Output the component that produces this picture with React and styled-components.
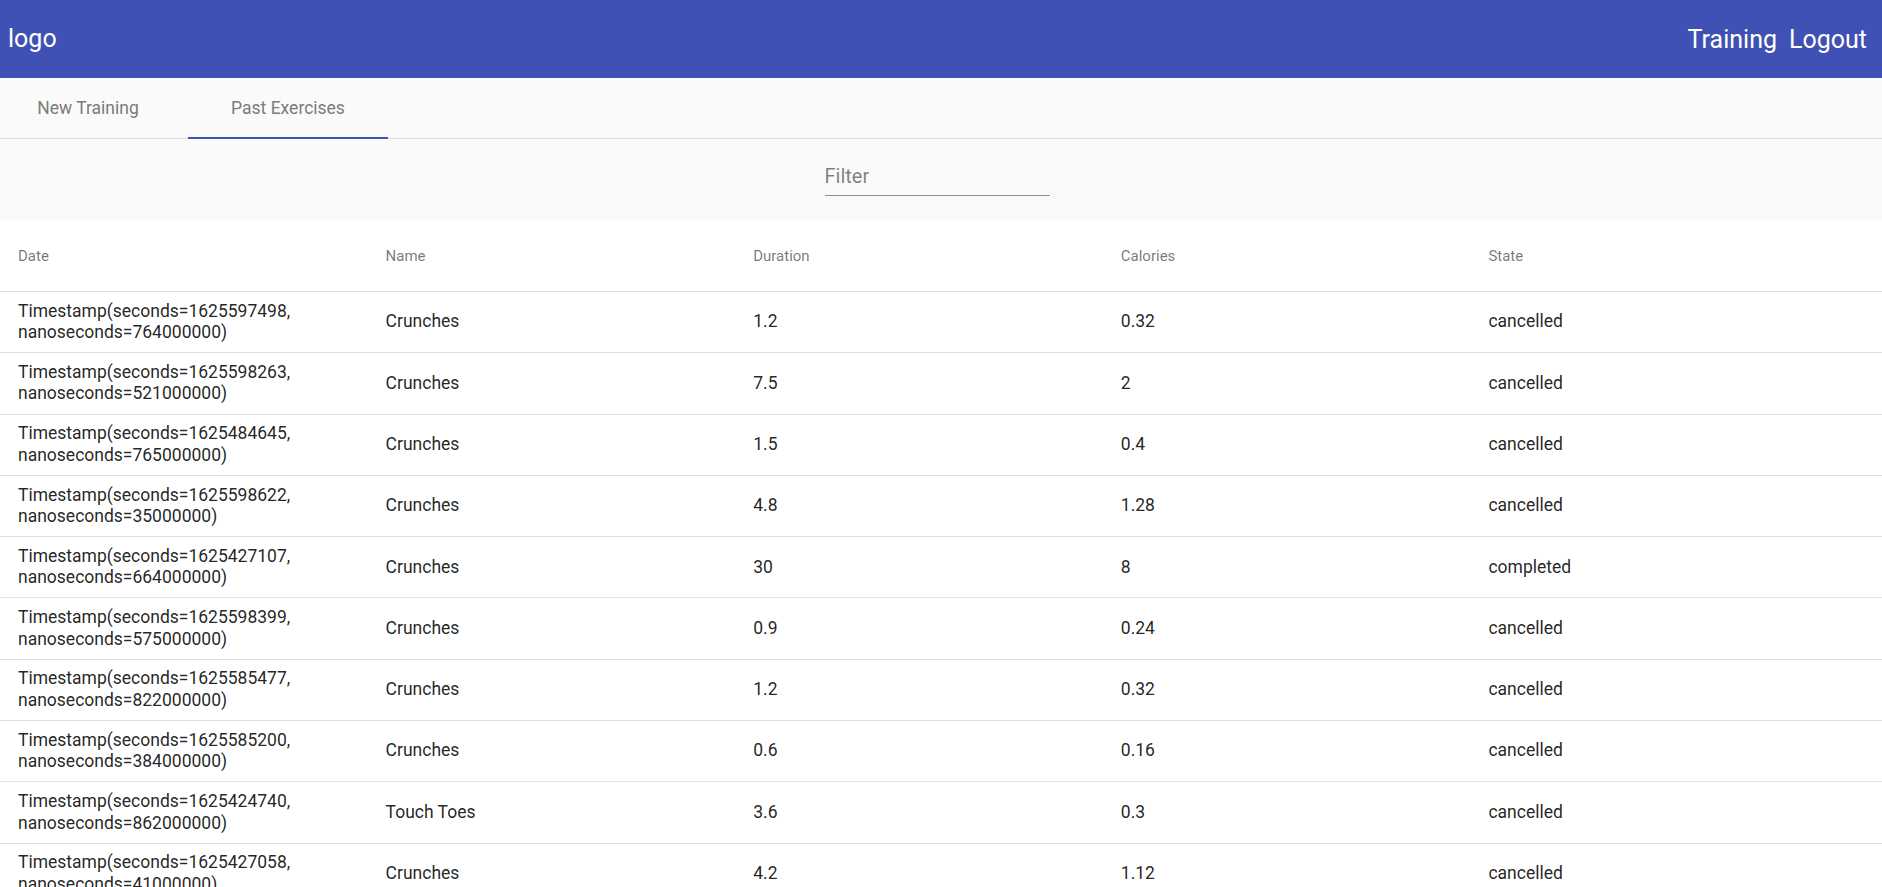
import React from "react";
import styled, { createGlobalStyle } from "styled-components";

const Global = createGlobalStyle`
  html, body {
    margin: 0;
    padding: 0;
    background: #fafafa;
    font-family: Roboto, "Helvetica Neue", sans-serif;
    color: rgba(0, 0, 0, 0.87);
  }
  * { box-sizing: border-box; }
`;

const Toolbar = styled.header`
  height: 78px;
  background: #3f51b5;
  color: #fff;
  display: flex;
  align-items: center;
  justify-content: space-between;
  padding: 0 15px 0 8px;
  font-size: 25px;
`;

const Brand = styled.div`
  line-height: 1;
  padding-bottom: 2px;
`;

const NavLinks = styled.nav`
  display: flex;
  gap: 12px;
`;

const NavLink = styled.a`
  color: #fff;
  text-decoration: none;
  cursor: pointer;
`;

const TabBar = styled.div`
  display: flex;
  height: 61px;
  border-bottom: 1px solid rgba(0, 0, 0, 0.12);
  background: #fafafa;
`;

const Tab = styled.div`
  position: relative;
  width: ${(p) => p.$width}px;
  margin-right: ${(p) => p.$gap || 0}px;
  display: flex;
  align-items: center;
  justify-content: center;
  font-size: 17.5px;
  color: #7b7b7b;
  cursor: pointer;

  &::after {
    content: "";
    position: absolute;
    left: 0;
    right: 0;
    bottom: -1px;
    height: 2.5px;
    background: ${(p) => (p.$active ? "#3f51b5" : "transparent")};
  }
`;

const FilterBar = styled.div`
  height: 81px;
  display: flex;
  justify-content: center;
`;

const FilterField = styled.label`
  width: 225px;
  margin-top: 20px;
  height: 37px;
  border-bottom: 1px solid rgba(0, 0, 0, 0.42);
  display: flex;
  align-items: flex-end;
  margin-left: -8px;
`;

const FilterInput = styled.input`
  width: 100%;
  border: none;
  outline: none;
  background: transparent;
  font-family: inherit;
  font-size: 20px;
  padding: 0 0 7px;
  color: rgba(0, 0, 0, 0.87);

  &::placeholder {
    color: rgba(0, 0, 0, 0.5);
  }
`;

const Table = styled.div`
  background: #fff;
`;

const Row = styled.div`
  display: grid;
  grid-template-columns: repeat(5, 1fr);
  align-items: center;
  min-height: ${(p) => (p.$header ? 72 : 61.3)}px;
  padding: 0 26px 0 18px;
  border-bottom: 1px solid rgba(0, 0, 0, 0.12);
`;

const HeadCell = styled.div`
  font-size: 15px;
  font-weight: 400;
  color: rgba(0, 0, 0, 0.54);
`;

const Cell = styled.div`
  font-size: 17.5px;
  line-height: 21.5px;
  color: rgba(0, 0, 0, 0.87);
  padding-right: 8px;
`;

const exercises = [
  ["1625597498", "764000000", "Crunches", "1.2", "0.32", "cancelled"],
  ["1625598263", "521000000", "Crunches", "7.5", "2", "cancelled"],
  ["1625484645", "765000000", "Crunches", "1.5", "0.4", "cancelled"],
  ["1625598622", "35000000", "Crunches", "4.8", "1.28", "cancelled"],
  ["1625427107", "664000000", "Crunches", "30", "8", "completed"],
  ["1625598399", "575000000", "Crunches", "0.9", "0.24", "cancelled"],
  ["1625585477", "822000000", "Crunches", "1.2", "0.32", "cancelled"],
  ["1625585200", "384000000", "Crunches", "0.6", "0.16", "cancelled"],
  ["1625424740", "862000000", "Touch Toes", "3.6", "0.3", "cancelled"],
  ["1625427058", "41000000", "Crunches", "4.2", "1.12", "cancelled"],
];

export default function App() {
  return (
    <>
      <Global />
      <Toolbar>
        <Brand>logo</Brand>
        <NavLinks>
          <NavLink>Training</NavLink>
          <NavLink>Logout</NavLink>
        </NavLinks>
      </Toolbar>

      <TabBar>
        <Tab $width={176} $gap={12}>New Training</Tab>
        <Tab $width={200} $active>Past Exercises</Tab>
      </TabBar>

      <FilterBar>
        <FilterField>
          <FilterInput placeholder="Filter" />
        </FilterField>
      </FilterBar>

      <Table>
        <Row $header>
          <HeadCell>Date</HeadCell>
          <HeadCell>Name</HeadCell>
          <HeadCell>Duration</HeadCell>
          <HeadCell>Calories</HeadCell>
          <HeadCell>State</HeadCell>
        </Row>
        {exercises.map(([sec, nano, name, dur, cal, state]) => (
          <Row key={sec}>
            <Cell>
              Timestamp(seconds={sec}, nanoseconds={nano})
            </Cell>
            <Cell>{name}</Cell>
            <Cell>{dur}</Cell>
            <Cell>{cal}</Cell>
            <Cell>{state}</Cell>
          </Row>
        ))}
      </Table>
    </>
  );
}
